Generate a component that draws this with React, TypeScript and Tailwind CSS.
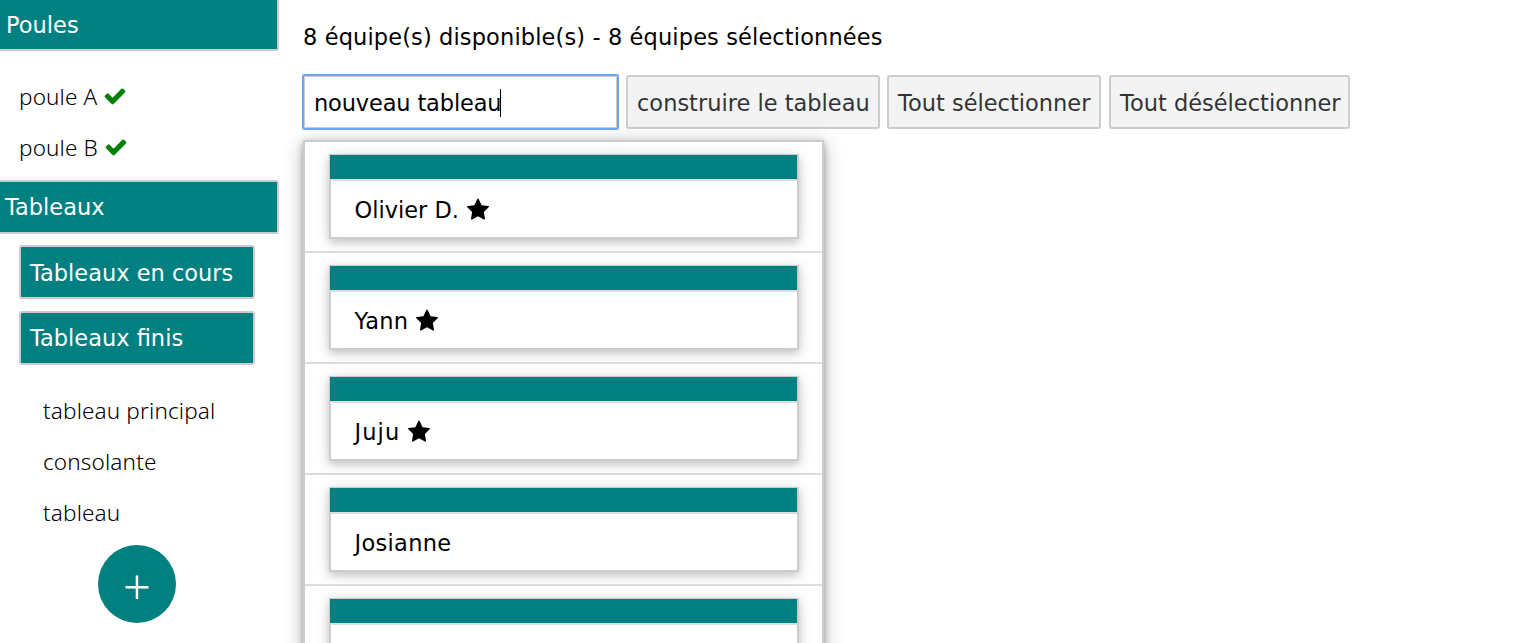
import React from "react";

const poules = ["poule A", "poule B"];
const finished = ["tableau principal", "consolante", "tableau"];
const teams = [
  { name: "Olivier D.", starred: true, spacing: "tracking-normal" },
  { name: "Yann", starred: true, spacing: "tracking-[0.2px]" },
  { name: "Juju", starred: true, spacing: "tracking-[1.1px]" },
  { name: "Josianne", starred: false, spacing: "tracking-[0.3px]" },
  { name: "", starred: false, spacing: "tracking-normal" },
];

function Check() {
  return (
    <svg viewBox="0 0 1792 1792" className="-mt-px ml-[6px] h-[24px] w-[24px] fill-[#008000]">
      <path d="M1671 566q0 40-28 68l-724 724-136 136q-28 28-68 28t-68-28l-136-136-362-362q-28-28-28-68t28-68l136-136q28-28 68-28t68 28l294 295 656-657q28-28 68-28t68 28l136 136q28 28 28 68z" />
    </svg>
  );
}

function Star() {
  return (
    <svg viewBox="0 0 1664 1792" className="ml-[8px] h-[24px] w-[22px] fill-black">
      <path d="M1664 647q0 22-26 48l-363 354 86 500q1 7 1 20 0 21-10.500 35.500t-30.500 14.500q-19 0-40-12l-449-236-449 236q-22 12-40 12-21 0-31.500-14.500t-10.500-35.500q0-6 2-20l86-500-364-354q-25-27-25-48 0-37 56-46l502-73 225-455q19-41 49-41t49 41l225 455 502 73q56 9 56 46z" />
    </svg>
  );
}

function Button({ children, className }: { children: React.ReactNode; className: string }) {
  return (
    <button
      className={`h-[54px] shrink-0 rounded-[3px] border-2 border-[#ccc] bg-[#f3f3f3] pt-px pl-[9px] text-left whitespace-nowrap text-[#333] ${className}`}
    >
      {children}
    </button>
  );
}

export default function App() {
  return (
    <div className="flex h-[643px] w-[1514px] overflow-hidden bg-white font-['DejaVu_Sans',sans-serif] text-[22.5px] leading-[34px] text-black">
      <aside className="flex w-[279px] shrink-0 flex-col">
        <div className="flex h-[51px] shrink-0 items-center rounded-br-[3px] border-r-2 border-b-2 border-[#ccc] bg-[#008080] pl-[6px] text-white">
          Poules
        </div>
        <ul className="mt-[21px] font-['Noto_Sans',sans-serif] font-[350] tracking-[0.15px]">
          {poules.map((p) => (
            <li key={p} className="flex h-[51px] items-center pb-[2px] pl-[19px]">
              {p}
              <Check />
            </li>
          ))}
        </ul>
        <div className="mt-[6px] flex h-[54px] shrink-0 items-center rounded-r-[3px] border-2 border-l-0 border-[#ccc] bg-[#008080] pl-[5px] text-white">
          Tableaux
        </div>
        <div className="mt-[11px] ml-[19px] flex h-[54px] w-[236px] shrink-0 items-center rounded-[3px] border-2 border-[#ccc] bg-[#008080] pt-px pl-[9px] text-white">
          Tableaux en cours
        </div>
        <div className="mt-[12px] ml-[19px] flex h-[54px] w-[236px] shrink-0 items-center rounded-[3px] border-2 border-[#ccc] bg-[#008080] pl-[9px] text-white">
          Tableaux finis
        </div>
        <ul className="mt-[21px] font-['Noto_Sans',sans-serif] font-[350] tracking-[0.15px]">
          {finished.map((t) => (
            <li key={t} className="flex h-[51px] items-center pb-[2px] pl-[43px]">
              {t}
            </li>
          ))}
        </ul>
        <button className="mt-[6px] ml-[98px] flex h-[78px] w-[78px] shrink-0 items-center justify-center rounded-full bg-[#008080] pt-[3px] font-['Noto_Sans',sans-serif] text-[49px] font-[350] text-white">
          +
        </button>
      </aside>

      <main className="flex flex-col pl-[24px]">
        <p className="mt-[20px] h-[34px] tracking-[0.12px] whitespace-nowrap">
          8 équipe(s) disponible(s) - 8 équipes sélectionnées
        </p>
        <div className="mt-[21px] flex h-[54px]">
          <div className="relative flex w-[315px] shrink-0 items-center rounded-[1px] border-2 border-[#ccc] pt-px pl-[9px] tracking-[-0.15px] ring-[1px] ring-[#6ea3f7] before:absolute before:-inset-[2px] before:rounded-[1px] before:border before:border-[#6ea3f7]">
            nouveau tableau
            <span className="-ml-px h-[28px] w-px bg-black" />
          </div>
          <Button className="ml-[8px] w-[254px]">construire le tableau</Button>
          <Button className="ml-[7px] w-[214px]">Tout sélectionner</Button>
          <Button className="ml-[8px] w-[241px]">Tout désélectionner</Button>
        </div>
        <ul className="mt-[11px] w-[521px] shrink-0 border-2 border-[#ccc] shadow-[0_3px_6px_rgba(0,0,0,0.3),0_3px_18px_rgba(0,0,0,0.28)]">
          {teams.map((team, i) => (
            <li key={i} className="h-[111px] border-b-2 border-[#ddd] pt-[12px] pr-[23px] pl-[24px]">
              <div className="h-[85px] border-2 border-t border-[#ccc] shadow-[0_3px_8px_rgba(0,0,0,0.16),0_3px_15px_rgba(0,0,0,0.12)]">
                <div className="-ml-px h-[26px] border-b-2 border-[#ddd] bg-[#008080]" />
                <div className="flex h-[56px] items-center pt-[2px] pl-[23.5px]">
                  <span className={team.spacing}>{team.name}</span>
                  {team.starred && <Star />}
                </div>
              </div>
            </li>
          ))}
        </ul>
      </main>
    </div>
  );
}
